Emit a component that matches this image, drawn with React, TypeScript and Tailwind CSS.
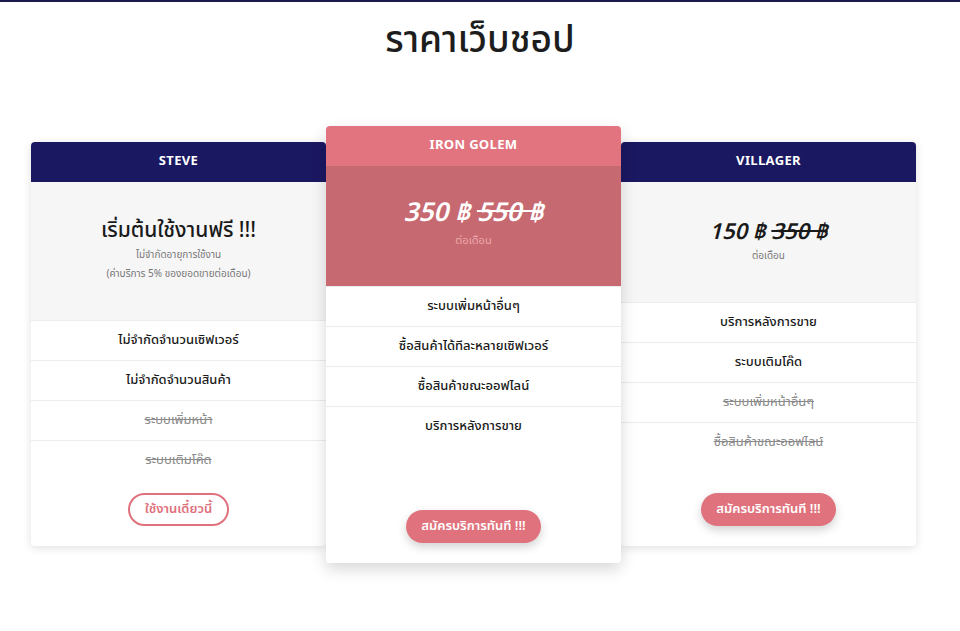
import React from 'react';

interface Feature {
  label: string;
  off?: boolean;
}

const font = { fontFamily: '"Noto Sans Thai", "Noto Sans", "Liberation Sans", sans-serif' };

const steveFeatures: Feature[] = [
  { label: 'ไม่จำกัดจำนวนเซิฟเวอร์' },
  { label: 'ไม่จำกัดจำนวนสินค้า' },
  { label: 'ระบบเพิ่มหน้า', off: true },
  { label: 'ระบบเติมโค๊ด', off: true },
];

const golemFeatures: Feature[] = [
  { label: 'ระบบเพิ่มหน้าอื่นๆ' },
  { label: 'ซื้อสินค้าได้ทีละหลายเซิฟเวอร์' },
  { label: 'ซื้อสินค้าขณะออฟไลน์' },
  { label: 'บริการหลังการขาย' },
];

const villagerFeatures: Feature[] = [
  { label: 'บริการหลังการขาย' },
  { label: 'ระบบเติมโค๊ด' },
  { label: 'ระบบเพิ่มหน้าอื่นๆ', off: true },
  { label: 'ซื้อสินค้าขณะออฟไลน์', off: true },
];

const FeatureList = ({ features }: { features: Feature[] }) => (
  <ul>
    {features.map((f, i) => (
      <li
        key={i}
        className={`h-10 flex items-center justify-center text-[13px] border-t border-[#ececec] ${
          f.off ? 'line-through text-[#8a8a8a]' : 'text-[#1a1a1a] font-medium'
        }`}
      >
        {f.label}
      </li>
    ))}
  </ul>
);

const SignupButton = () => (
  <button className="h-[33px] px-[15px] rounded-full bg-[#e0727d] text-white text-[13px] font-semibold shadow-[0_4px_10px_rgba(0,0,0,0.18)]">
    สมัครบริการทันที !!!
  </button>
);

export default function App() {
  return (
    <div className="min-h-[631px] bg-white border-t-2 border-[#1c1a4d]" style={font}>
      <h1 className="text-center text-[37px] font-medium text-[#1d1d1d] pt-[14px] leading-[50px]">
        ราคาเว็บชอป
      </h1>

      <div className="flex items-start pl-[31px] mt-[60px]">
        {/* STEVE */}
        <div className="w-[295px] mt-[16px] bg-white rounded shadow-[0_2px_10px_rgba(0,0,0,0.12)] overflow-hidden">
          <div className="h-10 bg-[#1b1862] flex items-center justify-center text-white text-[13px] font-bold tracking-wide">
            STEVE
          </div>
          <div className="h-[138px] bg-[#f6f6f6] flex flex-col items-center justify-center pb-[4px]">
            <div className="text-[21px] font-medium text-[#1a1a1a] leading-[30px]">เริ่มต้นใช้งานฟรี !!!</div>
            <div className="text-[10px] text-[#777] mt-[2px]">ไม่จำกัดอายุการใช้งาน</div>
            <div className="text-[10px] text-[#777] mt-[4px]">(ค่าบริการ 5% ของยอดขายต่อเดือน)</div>
          </div>
          <FeatureList features={steveFeatures} />
          <div className="flex justify-center pt-[13px] pb-[20px]">
            <button className="h-[33px] px-[15px] rounded-full border-2 border-[#e0727d] text-[#e0727d] text-[13px] font-semibold bg-white">
              ใช้งานเดี๋ยวนี้
            </button>
          </div>
        </div>

        {/* IRON GOLEM */}
        <div className="w-[295px] bg-white rounded shadow-[0_6px_16px_rgba(0,0,0,0.16)] overflow-hidden relative z-10">
          <div className="h-10 bg-[#e1747e] flex items-center justify-center text-white text-[13px] font-bold tracking-wide">
            IRON GOLEM
          </div>
          <div className="h-[120px] bg-[#c76970] flex flex-col items-center justify-center pb-[6px]">
            <div className="text-[26px] font-semibold italic text-white leading-[32px]">
              350 ฿ <span className="line-through">550 ฿</span>
            </div>
            <div className="text-[11px] text-[#eba8ad] mt-[4px]">ต่อเดือน</div>
          </div>
          <FeatureList features={golemFeatures} />
          <div className="flex justify-center pt-[64px] pb-[20px]">
            <SignupButton />
          </div>
        </div>

        {/* VILLAGER */}
        <div className="w-[295px] mt-[16px] bg-white rounded shadow-[0_2px_10px_rgba(0,0,0,0.12)] overflow-hidden">
          <div className="h-10 bg-[#1b1862] flex items-center justify-center text-white text-[13px] font-bold tracking-wide">
            VILLAGER
          </div>
          <div className="h-[120px] bg-[#f6f6f6] flex flex-col items-center justify-center pb-[2px]">
            <div className="text-[22px] font-semibold italic text-[#1a1a1a] leading-[30px]">
              150 ฿ <span className="line-through">350 ฿</span>
            </div>
            <div className="text-[10px] text-[#777] mt-[1px]">ต่อเดือน</div>
          </div>
          <FeatureList features={villagerFeatures} />
          <div className="flex justify-center pt-[31px] pb-[20px]">
            <SignupButton />
          </div>
        </div>
      </div>
    </div>
  );
}
